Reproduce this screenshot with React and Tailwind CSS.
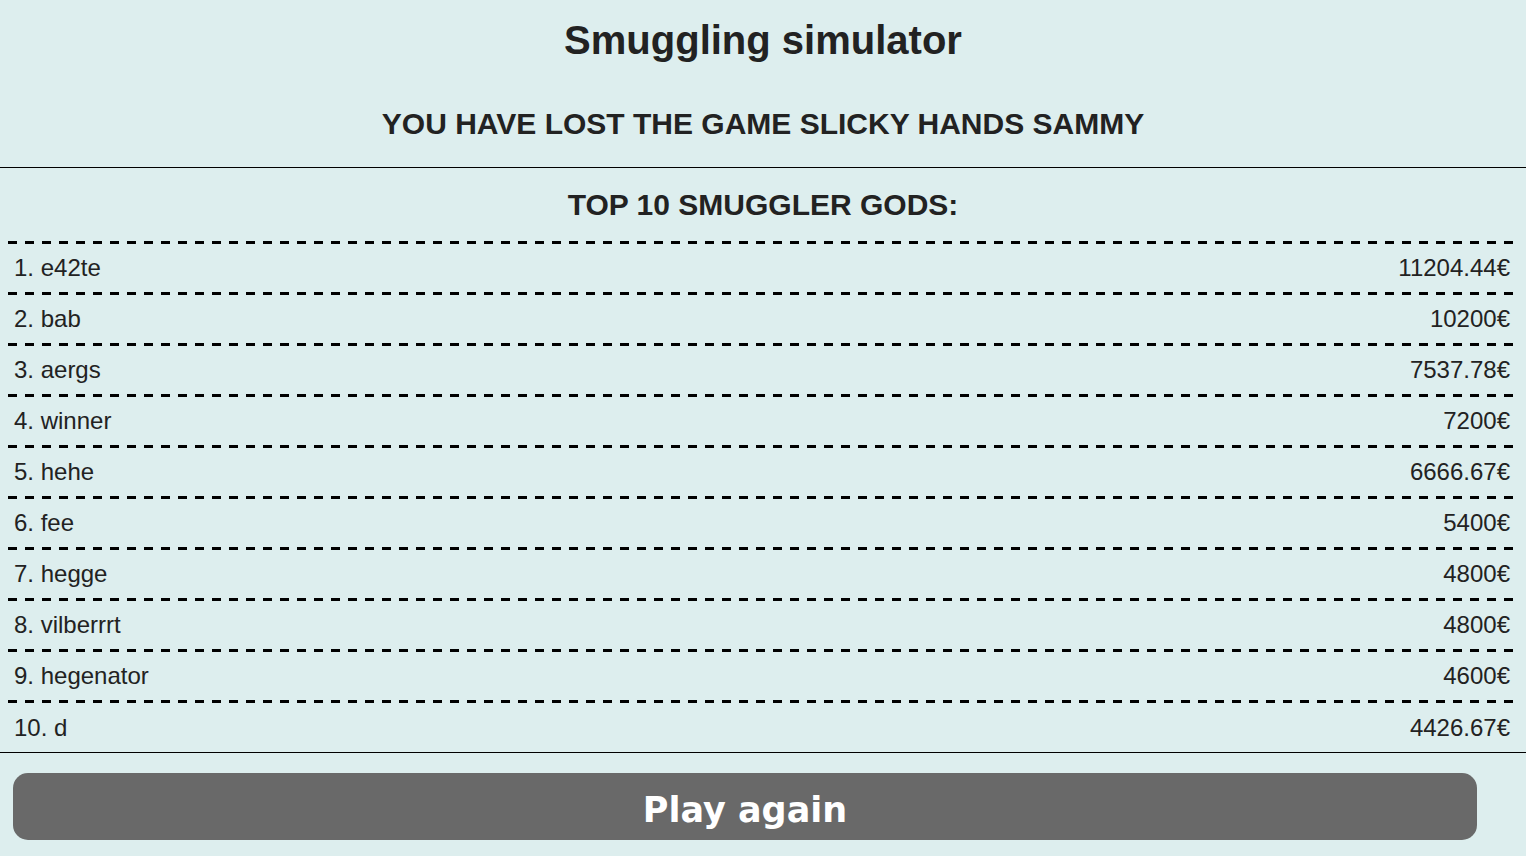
const rows = [
  ["1. e42te", "11204.44€"],
  ["2. bab", "10200€"],
  ["3. aergs", "7537.78€"],
  ["4. winner", "7200€"],
  ["5. hehe", "6666.67€"],
  ["6. fee", "5400€"],
  ["7. hegge", "4800€"],
  ["8. vilberrrt", "4800€"],
  ["9. hegenator", "4600€"],
  ["10. d", "4426.67€"],
];

export default function App() {
  return (
    <div className="min-h-screen bg-[#ddeeee] text-[#222] font-['Liberation_Sans',Arial,sans-serif]">
      <h1 className="pt-[17px] text-center text-[40px] leading-[46px] font-bold">Smuggling simulator</h1>
      <h2 className="mt-[43px] text-center text-[30px] leading-[35px] font-bold">
        YOU HAVE LOST THE GAME SLICKY HANDS SAMMY
      </h2>
      <div className="mt-[26px] border-t border-black">
        <h3 className="mt-[19px] text-center text-[30px] leading-[35px] font-bold">TOP 10 SMUGGLER GODS:</h3>
        <div className="mt-[19px] px-2">
          {rows.map(([name, score], i) => (
            <div key={name} className={i === 9 ? "flex h-[52px] flex-col" : "flex h-[51px] flex-col"}>
              <div className="h-[3px] bg-[repeating-linear-gradient(to_right,#000_0_9px,transparent_9px_17px)]" />
              <div className="flex flex-1 items-center justify-between pl-1.5 pr-2 text-[24px]">
                <span>{name}</span>
                <span>{score}</span>
              </div>
            </div>
          ))}
        </div>
      </div>
      <div className="border-t border-black px-[13px] pt-5 pb-4">
        <button className="flex h-[67px] w-[1464px] items-center justify-center rounded-[15px] bg-[#696969] pt-2 font-['DejaVu_Sans',sans-serif] text-[35px] font-bold text-white">
          Play again
        </button>
      </div>
    </div>
  );
}
